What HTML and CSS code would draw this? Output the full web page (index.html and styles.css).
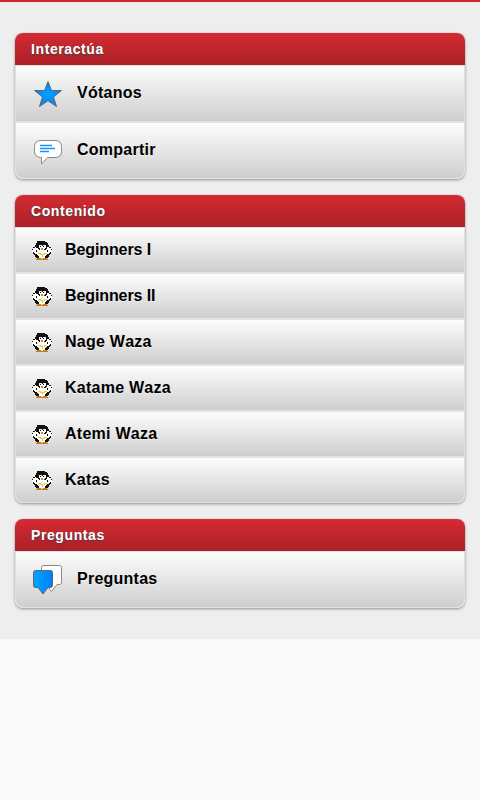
FILE: index.html
```html
<!DOCTYPE html>
<html lang="es">
<head>
<meta charset="utf-8">
<title>Menú</title>
<link rel="stylesheet" href="styles.css">
</head>
<body>
<svg class="defs" width="0" height="0">
  <defs>
    <radialGradient id="blue"><stop offset="0" stop-color="#00a2ff"/><stop offset="1" stop-color="#0082ff"/></radialGradient>
    <linearGradient id="bubble"><stop offset="0" stop-color="#00a6ff"/><stop offset="1" stop-color="#007eff"/></linearGradient>
    <symbol id="penguin" viewBox="0 0 20 20">
      <path fill="#fff" d="M3 5h14v1h2v2h1v4h-2v2h-2v3H4v-3H2v-2H0V8h1V6h2z"/>
      <path fill="#111" d="M5 0h8v1h2v1h1v2h1v2h-2v2h-2V7h1V4h-3v1h-1V4H7v3h1v1H6V7H4V6H3V4h1V2h1z"/>
      <path fill="#111" d="M8 5h1v1H8zM11 5h1v1h-1zM7 8h1v1H7zM12 8h2v1h-2zM4 9h1v2H4zM15 9h1v2h-1zM1 6h2v1H1zM0 8h1v1H0zM17 6h2v1h-2zM19 8h1v1h-1zM1 11h1v1h1v1h2v1h1v1h1v2H4v-1H3v-2H2v-1H1zM18 11h1v2h-1v1h-1v2h-1v1h-3v-2h1v-1h1v-1h2v-1h1z"/>
      <path fill="#d98218" d="M9 7h2v2H9z"/>
      <path fill="#e3d33a" d="M6 12h3v1h3v-1h3v1h-2v1h-2v2h-1v-2H8v-1H6z"/>
      <path fill="#c9781c" d="M5 17h4v1h2v-1h4v1h1v1H4v-1h1z"/>
    </symbol>
  </defs>
</svg>
<main class="page">
  <section class="list">
    <h2>Interactúa</h2>
    <ul>
      <li class="large"><svg class="icon" viewBox="0 0 32 32"><path d="M16 3.500l3.500 9h10l-8 6.500 3 9.500-8.500-5.700-8.500 5.700 3-9.500-8-6.500h10z" fill="url(#blue)" stroke="#666"/></svg><span>Vótanos</span></li>
      <li class="large"><svg class="icon" viewBox="0 0 32 32"><path d="M9 5.500h14q6.500 0 6.500 6v5q0 6-6.500 6h-7.500l-6 6.500v-6.500q-7 0-7-6v-5q0-6 6.500-6z" fill="#fff" stroke="#888"/><path d="M8 10.500h12M8 13.500h15M8 16.500h9" stroke="#1593ff" stroke-width="1.400"/></svg><span>Compartir</span></li>
    </ul>
  </section>
  <section class="list">
    <h2>Contenido</h2>
    <ul>
      <li><svg class="penguin"><use href="#penguin"/></svg><span class="tight">Beginners I</span></li>
      <li><svg class="penguin"><use href="#penguin"/></svg><span class="tight">Beginners II</span></li>
      <li><svg class="penguin"><use href="#penguin"/></svg><span>Nage Waza</span></li>
      <li><svg class="penguin"><use href="#penguin"/></svg><span>Katame Waza</span></li>
      <li><svg class="penguin"><use href="#penguin"/></svg><span>Atemi Waza</span></li>
      <li><svg class="penguin"><use href="#penguin"/></svg><span>Katas</span></li>
    </ul>
  </section>
  <section class="list">
    <h2>Preguntas</h2>
    <ul>
      <li class="large"><svg class="icon" viewBox="0 0 32 32"><path d="M11.500 1.500h16q2 0 2 2v15q0 2-2 2h-2.500l-5.500 7-5-7h-3q-2 0-2-2v-15q0-2 2-2z" fill="#fff" stroke="#888"/><path d="M3.500 6.500h15q2 0 2 2v13q0 2-2 2h-2.500l-5 6.500-5-6.500h-2.500q-2 0-2-2v-13q0-2 2-2z" fill="url(#bubble)" stroke="#666"/></svg><span>Preguntas</span></li>
    </ul>
  </section>
</main>
</body>
</html>
```
FILE: styles.css
```css
* { box-sizing: border-box; }
body { margin: 0; background: #f9f9f9; font-family: "Liberation Sans", Arial, sans-serif; font-kerning: none; }
.defs { display: block; }
.page { height: 639px; padding: 31px 15px 0; border-top: 2px solid #c9252c; background: #eee; }
.list { margin-bottom: 16px; border-radius: 8px; box-shadow: 0 1px 3px rgba(0,0,0,.4); }
h2 { height: 32px; margin: 0; padding: 0 16px; border-radius: 8px 8px 0 0; background: linear-gradient(#d42b32, #ab2027); color: #fff; font-size: 14px; line-height: 32px; letter-spacing: .6px; text-shadow: 0 1px 2px #444; }
ul { margin: 0; padding: 0; list-style: none; }
li { display: flex; height: 46px; padding: 0 16px; border: 1px solid #e2e2e2; background: linear-gradient(#fdfdfd, #cecece) padding-box; color: #000; font-size: 16px; font-weight: bold; line-height: 20px; letter-spacing: .25px; text-shadow: 0 1px 0 #eee; }
li span { padding-top: 12px; }
li:last-child { border-radius: 0 0 8px 8px; }
.tight { letter-spacing: -.1px; }
.large { height: 57px; }
.large span { padding-top: 17px; }
.icon { width: 32px; height: 32px; margin: 12px 13px 0 0; }
.penguin { width: 20px; height: 20px; margin: 13px 13px 0 0; shape-rendering: crispEdges; }
```
